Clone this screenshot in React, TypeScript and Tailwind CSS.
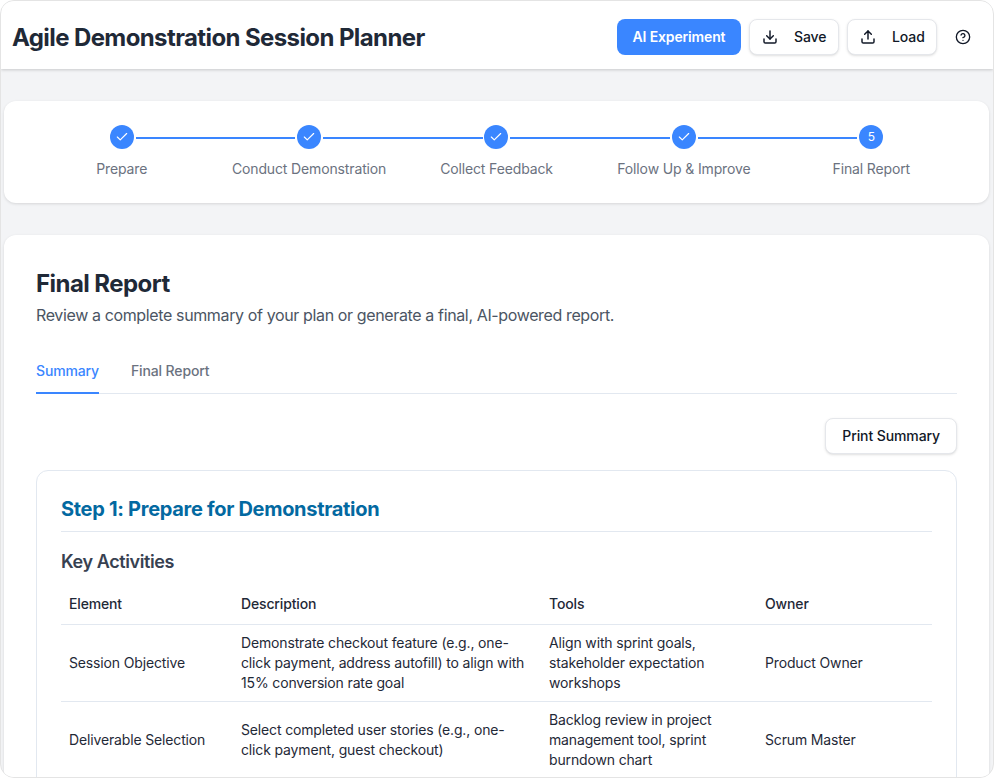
import { Download, Upload, CircleHelp, Check } from "lucide-react";

const steps = [
  { label: "Prepare", done: true },
  { label: "Conduct Demonstration", done: true },
  { label: "Collect Feedback", done: true },
  { label: "Follow Up & Improve", done: true },
  { label: "Final Report", done: false },
];

const rows = [
  {
    el: "Session Objective",
    desc: "Demonstrate checkout feature (e.g., one-click payment, address autofill) to align with 15% conversion rate goal",
    tools: "Align with sprint goals, stakeholder expectation workshops",
    owner: "Product Owner",
  },
  {
    el: "Deliverable Selection",
    desc: "Select completed user stories (e.g., one-click payment, guest checkout)",
    tools: "Backlog review in project management tool, sprint burndown chart",
    owner: "Scrum Master",
  },
];

export default function App() {
  return (
    <div className="h-screen overflow-hidden bg-white font-['Inter',sans-serif]">
      <div className="h-full overflow-hidden rounded-[14px] border border-[#e4e4e4] bg-[#f3f4f6]">
        <header className="flex h-[68px] items-center justify-between bg-white pl-[11px] pr-[12px] pt-1 shadow-[0_1px_3px_rgba(0,0,0,0.18)]">
          <h1 className="pt-[2px] text-2xl font-bold tracking-[-0.6px] text-[#1f2937]">Agile Demonstration Session Planner</h1>
          <div className="flex items-center gap-2">
            <button className="h-9 w-[124px] rounded-lg bg-[#3a86ff] text-sm font-semibold tracking-[-0.15px] text-white">AI Experiment</button>
            <button className="flex h-9 w-[90px] items-center rounded-lg border border-[#e5e7eb] bg-white pl-3 text-sm font-medium tracking-[-0.1px] text-[#111827] shadow-sm">
              <Download size={16} strokeWidth={2.2} />
              <span className="ml-4">Save</span>
            </button>
            <button className="flex h-9 w-[90px] items-center rounded-lg border border-[#e5e7eb] bg-white pl-3 text-sm font-medium tracking-[-0.1px] text-[#111827] shadow-sm">
              <Upload size={16} strokeWidth={2.2} />
              <span className="ml-4">Load</span>
            </button>
            <div className="flex h-9 w-9 items-center justify-center text-[#111827]">
              <CircleHelp size={16} />
            </div>
          </div>
        </header>

        <main className="pl-[3px] pr-1 pt-8">
          <section className="rounded-xl bg-white px-6 pb-6 pt-6 shadow-[0_1px_3px_rgba(0,0,0,0.12)]">
            <div className="grid h-[54px] grid-cols-5">
              {steps.map((s, i) => (
                <div key={s.label} className="relative flex flex-col items-center">
                  {i < steps.length - 1 && (
                    <div className="absolute left-[calc(50%+14px)] right-[calc(-50%+14px)] top-[12px] h-0.5 bg-[#3a86ff]" />
                  )}
                  <div className="flex h-6 w-6 items-center justify-center rounded-full bg-[#3a86ff] text-xs font-normal text-white">
                    {s.done ? <Check size={14} strokeWidth={2} /> : "5"}
                  </div>
                  <span className="mt-[10px] text-sm leading-5 tracking-[-0.14px] text-[#6b7280]">{s.label}</span>
                </div>
              ))}
            </div>
          </section>

          <section className="mt-8 rounded-xl bg-white px-8 pb-10 pt-[33px] shadow-[0_1px_3px_rgba(0,0,0,0.12)]">
            <h2 className="text-2xl font-bold leading-8 tracking-[-0.55px] text-[#1f2937]">Final Report</h2>
            <p className="mt-[3px] text-base leading-6 tracking-[-0.37px] text-[#4b5563]">Review a complete summary of your plan or generate a final, AI-powered report.</p>

            <div className="mt-[31px] flex gap-8 border-b border-[#e2e8f0] text-sm font-medium tracking-[-0.14px]">
              <div className="-mb-px border-b-2 border-[#3a86ff] pb-[11px] pt-[3px] text-[#3a86ff]">Summary</div>
              <div className="pb-[11px] pt-[3px] text-[#6b7280]">Final Report</div>
            </div>

            <div className="mt-6 flex justify-end">
              <button className="h-9 rounded-lg border border-[#e5e7eb] bg-white px-4 text-sm font-medium tracking-[-0.1px] text-[#111827] shadow-sm">Print Summary</button>
            </div>

            <div className="mt-4 rounded-xl border border-[#e2e8f0] px-6 pb-8 pt-6">
              <h3 className="border-b border-[#e2e8f0] pb-2 text-xl font-bold leading-7 tracking-[-0.3px] text-[#0369a1]">Step 1: Prepare for Demonstration</h3>
              <h4 className="mt-4 text-lg font-semibold leading-7 tracking-[-0.4px] text-[#374151]">Key Activities</h4>
              <table className="mt-2 w-full table-fixed text-sm tracking-[-0.15px] text-[#1f2937]">
                <colgroup>
                  <col className="w-[172px]" />
                  <col className="w-[308px]" />
                  <col className="w-[216px]" />
                  <col />
                </colgroup>
                <thead>
                  <tr className="border-b border-[#e2e8f0] text-left">
                    <th className="px-2 py-[10px] font-medium leading-5">Element</th>
                    <th className="px-2 py-[10px] font-medium leading-5">Description</th>
                    <th className="px-2 py-[10px] font-medium leading-5">Tools</th>
                    <th className="px-2 py-[10px] font-medium leading-5">Owner</th>
                  </tr>
                </thead>
                <tbody>
                  {rows.map((r) => (
                    <tr key={r.el} className="border-b border-[#e2e8f0]">
                      <td className="px-2 py-2 leading-5">{r.el}</td>
                      <td className="px-2 py-2 leading-5">{r.desc}</td>
                      <td className="px-2 py-2 leading-5">{r.tools}</td>
                      <td className="px-2 py-2 leading-5">{r.owner}</td>
                    </tr>
                  ))}
                </tbody>
              </table>
            </div>
          </section>
        </main>
      </div>
    </div>
  );
}
